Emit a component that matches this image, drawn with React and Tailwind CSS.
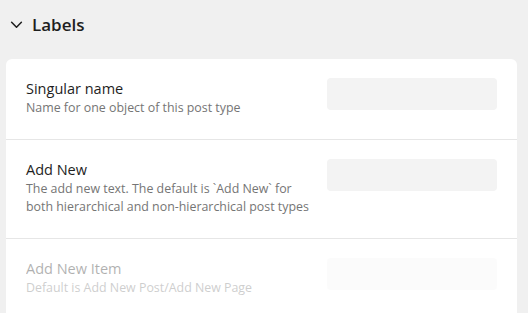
import React from 'react';

const rows = [
  {
    title: 'Singular name',
    desc: 'Name for one object of this post type',
  },
  {
    title: 'Add New',
    desc: 'The add new text. The default is `Add New` for both hierarchical and non-hierarchical post types',
  },
  {
    title: 'Add New Item',
    desc: 'Default is Add New Post/Add New Page',
    faded: true,
  },
];

const Row = ({ title, desc, faded, last }) => (
  <div className={`flex items-start justify-between px-5 pt-[19px] pb-[22px] ${last ? '' : 'border-b border-[#e6e6e6]'} ${faded ? 'opacity-35' : ''}`}>
    <div className="w-[292px]">
      <div className="text-[14.5px] leading-[21px] text-[#1e1e1e]">{title}</div>
      <div className="text-[12.4px] leading-[18px] text-[#757575]">{desc}</div>
    </div>
    <div className="w-[170px] h-[32px] rounded bg-[#f3f3f3]" />
  </div>
);

export default function App() {
  return (
    <div className="w-[528px] h-[313px] overflow-hidden bg-[#f0f0f0] pl-[6px] pr-[11px]" style={{ fontFamily: '"Open Sans", "Noto Sans", sans-serif' }}>
      <div className="flex items-center gap-[9px] h-[59px] pl-[4px] pb-[10px]">
        <svg width="13" height="13" viewBox="0 0 12 12" fill="none" stroke="#1e1e1e" strokeWidth="1.4" strokeLinecap="round" strokeLinejoin="round">
          <path d="M1.5 4l4.5 4.5 4.5-4.5" />
        </svg>
        <span className="text-[17px] font-semibold text-[#1e1e1e]">Labels</span>
      </div>
      <div className="bg-white rounded-t-md">
        {rows.map((r, i) => (
          <Row key={r.title} {...r} last={i === rows.length - 1} />
        ))}
      </div>
    </div>
  );
}
